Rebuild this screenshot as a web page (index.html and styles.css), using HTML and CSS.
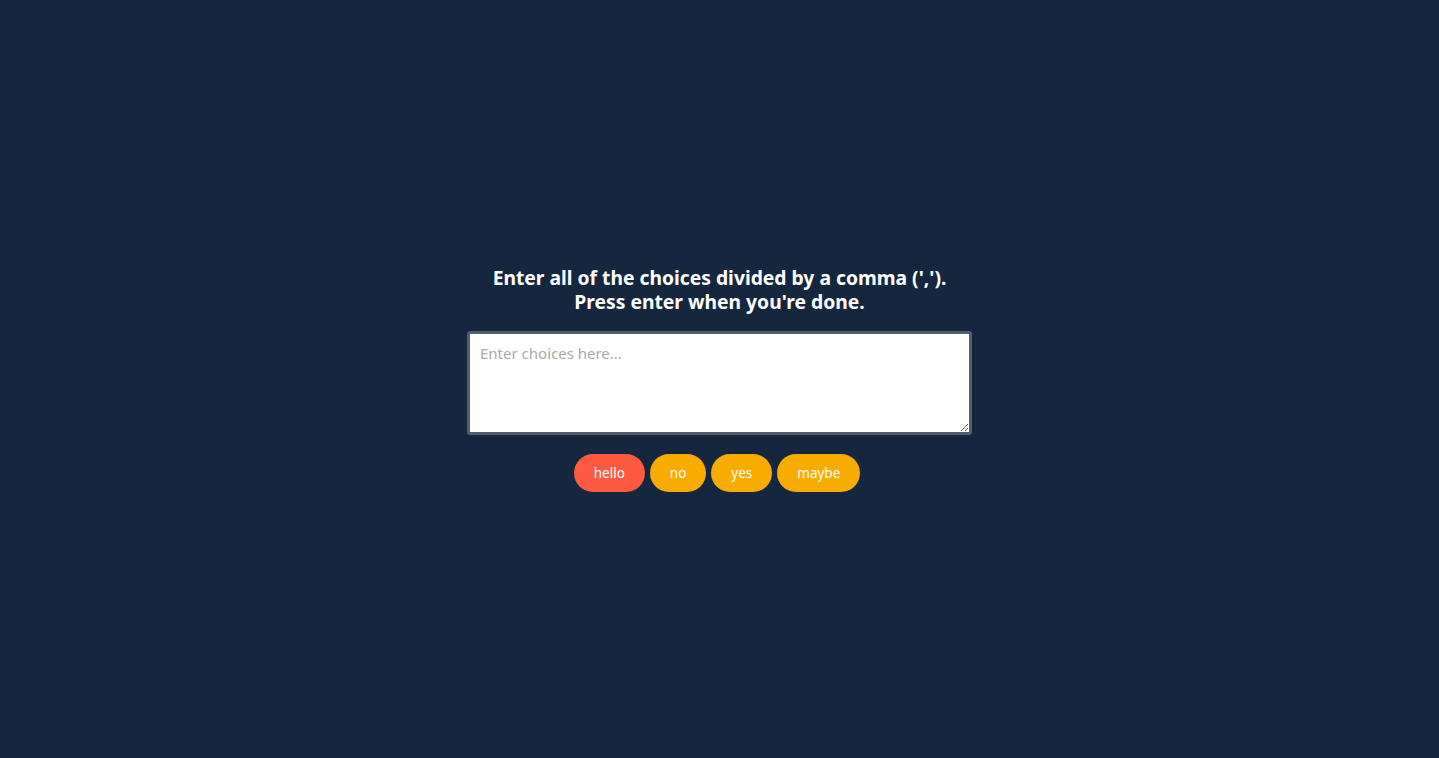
FILE: index.html
```html
<!DOCTYPE html>
<html lang="en">
<head>
<meta charset="utf-8">
<title>Choice picker</title>
<link rel="stylesheet" href="styles.css">
</head>
<body>
<main class="container">
  <h3 class="title">Enter all of the choices divided by a comma (',').<br>Press enter when you're done.</h3>
  <textarea class="choices" placeholder="Enter choices here..." autofocus></textarea>
  <div class="tags">
    <span class="tag highlight">hello</span>
    <span class="tag">no</span>
    <span class="tag">yes</span>
    <span class="tag">maybe</span>
  </div>
</main>
</body>
</html>
```
FILE: styles.css
```css
* { box-sizing: border-box; }
html, body { height: 100%; }
body {
  margin: 0;
  background: #15273f;
  font-family: "Noto Sans", "Lato", sans-serif;
  color: #fff;
  overflow: hidden;
}
.container {
  height: 100%;
  display: flex;
  flex-direction: column;
  align-items: center;
  justify-content: center;
}
.title {
  margin: 0 0 17px;
  font-size: 19.3px;
  line-height: 24px;
  font-weight: 700;
  text-align: center;
}
.choices {
  width: 505px;
  height: 104px;
  border: 3px solid #525e6c;
  border-radius: 3px;
  padding: 9px 10px;
  font-family: "Noto Sans", "Lato", sans-serif;
  font-size: 15px;
  color: #333;
  background: #fff;
  outline: none;
}
.choices::placeholder { color: #a9a9a9; }
.tags {
  margin-top: 19px;
  display: flex;
}
.tag {
  height: 38px;
  margin-right: 5px;
  padding: 0 20px;
  border-radius: 19px;
  background: #f9ac00;
  color: #fff;
  font-size: 13.5px;
  display: flex;
  align-items: center;
}
.tag.highlight { background: #ff5a3f; }
```
